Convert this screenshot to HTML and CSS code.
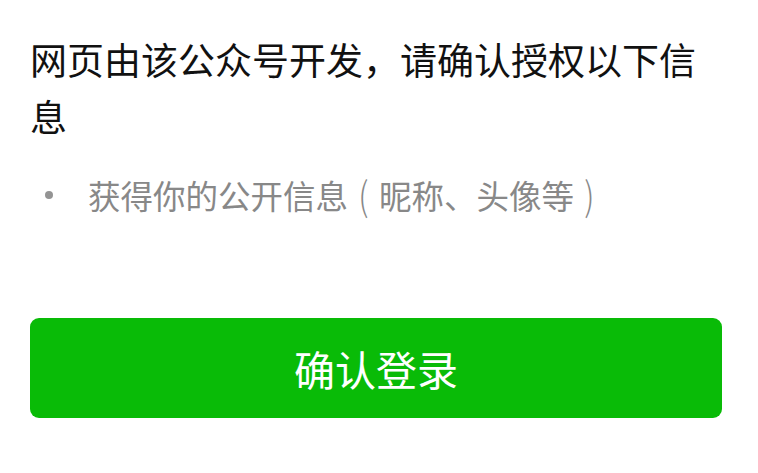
FILE: index.html
```html
<!DOCTYPE html>
<html lang="zh-CN">
<head>
<meta charset="utf-8">
<title>授权</title>
<link rel="stylesheet" href="styles.css">
</head>
<body>
<main class="page">
  <h1 class="title">网页由该公众号开发，请确认授权以下信息</h1>
  <ul class="perms">
    <li class="perm"><span class="dot"></span><span class="perm-text">获得你的公开信息<span class="paren">(</span>昵称、头像等<span class="paren">)</span></span></li>
  </ul>
  <button class="confirm" type="button">确认登录</button>
</main>
</body>
</html>
```

FILE: styles.css
```css
html, body {
  margin: 0;
  padding: 0;
  background: #ffffff;
}

body {
  font-family: "Noto Sans CJK SC", "Noto Sans", sans-serif;
}

.page {
  display: flex;
  flex-direction: column;
  padding: 31px 36px 0 30px;
}

.title {
  margin: 0;
  font-size: 37px;
  line-height: 57px;
  font-weight: 400;
  color: #111111;
  width: 694px;
}

.perms {
  list-style: none;
  margin: 30px 0 0 0;
  padding: 0;
}

.perm {
  display: flex;
  align-items: center;
  height: 40px;
}

.dot {
  width: 8px;
  height: 8px;
  border-radius: 50%;
  background: #949494;
  margin-left: 15px;
  margin-right: 35px;
  flex: none;
}

.perm-text {
  font-size: 32.5px;
  line-height: 40px;
  color: #888888;
  white-space: nowrap;
}

.paren {
  display: inline-block;
  width: 0.95em;
  text-align: center;
  font-weight: 300;
  transform: scale(1, 1.2);
  transform-origin: 50% 60%;
}

.confirm {
  margin-top: 103px;
  height: 100px;
  width: 692px;
  border: none;
  border-radius: 9px;
  background: #09bb07;
  color: #ffffff;
  font-family: "Noto Sans CJK SC", "Noto Sans", sans-serif;
  font-size: 41px;
  padding: 0;
}
```
